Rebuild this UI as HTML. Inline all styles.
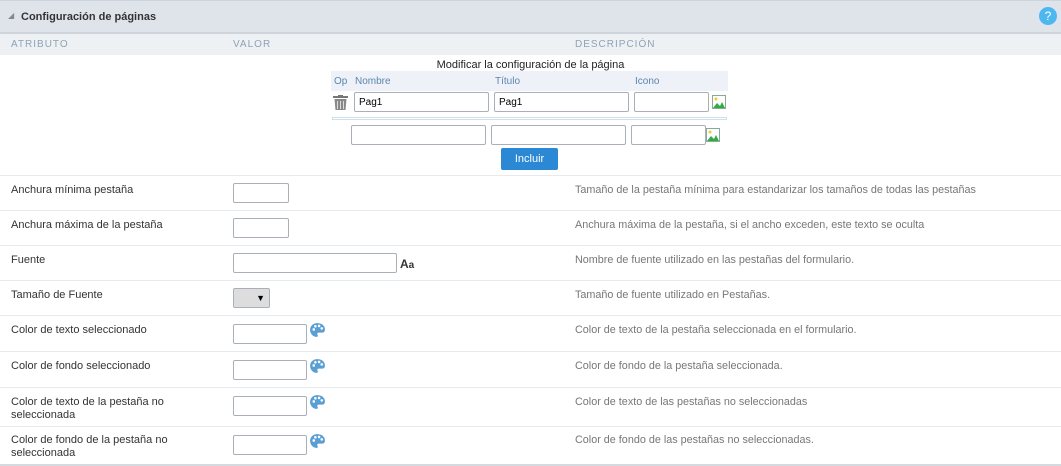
<!DOCTYPE html><html><head><style>
body{margin:0;width:1061px;height:466px;position:relative;background:#fff;font-family:"Liberation Sans",sans-serif;overflow:hidden}
.a{position:absolute}
.hd{left:0;top:0;width:1061px;height:31px;background:#dfe4eb;border-top:1px solid #cdd4dc;border-bottom:2px solid #cdd4dc}
.ch{left:0;top:34px;width:1061px;height:21px;background:#eef1f4;font-size:10px;letter-spacing:1px;color:#8fa3b3}
.in{position:absolute;border:1px solid #a9b0b8;border-radius:2px;background:#fff;box-sizing:border-box;font-size:10px;padding:4px 4px 2px}
.sep{position:absolute;left:0;width:1061px;height:1px;background:#e6e9ed}
.l{position:absolute;left:11px;font-size:11px;color:#333;line-height:13px;margin-top:1px}
.d{position:absolute;left:575px;font-size:10.8px;color:#777;margin-top:1px}
.th{position:absolute;font-size:10px;color:#5b86b0;margin-top:1px}
</style></head><body>
<div class="a hd"><span class="a" style="left:8px;top:10px;font-size:8px;color:#888">◢</span><span class="a" style="left:21px;top:10px;font-size:11px;font-weight:bold;color:#333">Configuración de páginas</span>
<div class="a" style="left:1039px;top:6px;width:18px;height:18px;border-radius:9px;background:#4db8f0;color:#fff;font-size:12px;text-align:center;line-height:18px">?</div></div>
<div class="a ch"><span class="a" style="left:11px;top:5px">ATRIBUTO</span><span class="a" style="left:233px;top:5px">VALOR</span><span class="a" style="left:575px;top:5px">DESCRIPCIÓN</span></div>
<div class="a" style="left:0;top:59px;width:1061px;text-align:center;font-size:11px;color:#222">Modificar la configuración de la página</div>
<div class="a" style="left:331px;top:71px;width:397px;height:20px;background:#eef1f7"></div>
<span class="th" style="left:334px;top:75px">Op</span><span class="th" style="left:355px;top:75px">Nombre</span><span class="th" style="left:495px;top:75px">Título</span><span class="th" style="left:635px;top:75px">Icono</span>
<svg class="a" style="left:333px;top:95px" width="15" height="15" viewBox="0 0 15 15"><rect x="0" y="1" width="15" height="2" fill="#777"/><rect x="5" y="0" width="5" height="2" fill="#777"/><path d="M1.5 4h12l-1 11h-10z" fill="#888"/><path d="M4.5 6v8M7.5 6v8M10.5 6v8" stroke="#ddd"/></svg>
<div class="in" style="left:354px;top:92px;width:135px;height:20px">Pag1</div>
<div class="in" style="left:494px;top:92px;width:135px;height:20px">Pag1</div>
<div class="in" style="left:634px;top:92px;width:75px;height:20px"></div>
<svg class="a" style="left:712px;top:95px" width="14" height="14"><rect x=".5" y=".5" width="13" height="13" fill="#fff" stroke="#8a9"/><circle cx="4" cy="4" r="1.5" fill="#ec3"/><path d="M1 13L5 8l3 3 2-4 3 6z" fill="#3a4"/></svg>
<div class="a" style="left:332px;top:117px;width:393px;height:1px;border:1px solid #cfe0e8"></div>
<div class="in" style="left:351px;top:125px;width:135px;height:20px"></div>
<div class="in" style="left:491px;top:125px;width:135px;height:20px"></div>
<div class="in" style="left:631px;top:125px;width:75px;height:20px"></div>
<svg class="a" style="left:706px;top:128px" width="14" height="14"><rect x=".5" y=".5" width="13" height="13" fill="#fff" stroke="#8a9"/><circle cx="4" cy="4" r="1.5" fill="#ec3"/><path d="M1 13L5 8l3 3 2-4 3 6z" fill="#3a4"/></svg>
<div class="a" style="left:501px;top:148px;width:57px;height:22px;background:#2a88d4;border-radius:2px;color:#fff;font-size:11px;text-align:center;line-height:22px">Incluir</div>
<div class="sep" style="top:175px"></div><div class="sep" style="top:210px"></div><div class="sep" style="top:245px"></div><div class="sep" style="top:280px"></div><div class="sep" style="top:315px"></div><div class="sep" style="top:351px"></div><div class="sep" style="top:387px"></div><div class="sep" style="top:426px"></div><div class="sep" style="top:464px;height:2px;background:#d5dae0"></div>
<div class="l" style="top:183px">Anchura mínima pestaña</div><div class="in" style="left:233px;top:183px;width:56px;height:20px"></div><div class="d" style="top:183px">Tamaño de la pestaña mínima para estandarizar los tamaños de todas las pestañas</div>
<div class="l" style="top:218px">Anchura máxima de la pestaña</div><div class="in" style="left:233px;top:218px;width:56px;height:20px"></div><div class="d" style="top:218px">Anchura máxima de la pestaña, si el ancho exceden, este texto se oculta</div>
<div class="l" style="top:253px">Fuente</div><div class="in" style="left:233px;top:253px;width:164px;height:20px"></div><span class="a" style="left:400px;top:257px;font-size:12px;font-weight:bold;color:#333">A<span style="font-size:10px">a</span></span><div class="d" style="top:253px">Nombre de fuente utilizado en las pestañas del formulario.</div>
<div class="l" style="top:288px">Tamaño de Fuente</div><div class="in" style="left:233px;top:288px;width:37px;height:20px;background:#ddd;text-align:right;font-size:9px;padding:4px 4px">▼</div><div class="d" style="top:288px">Tamaño de fuente utilizado en Pestañas.</div>
<div class="l" style="top:323px">Color de texto seleccionado</div><div class="in" style="left:233px;top:324px;width:74px;height:20px"></div><div class="d" style="top:323px">Color de texto de la pestaña seleccionada en el formulario.</div>
<div class="l" style="top:359px">Color de fondo seleccionado</div><div class="in" style="left:233px;top:360px;width:74px;height:20px"></div><div class="d" style="top:359px">Color de fondo de la pestaña seleccionada.</div>
<div class="l" style="top:395px">Color de texto de la pestaña no<br>seleccionada</div><div class="in" style="left:233px;top:396px;width:74px;height:20px"></div><div class="d" style="top:395px">Color de texto de las pestañas no seleccionadas</div>
<div class="l" style="top:433px">Color de fondo de la pestaña no<br>seleccionada</div><div class="in" style="left:233px;top:435px;width:74px;height:20px"></div><div class="d" style="top:433px">Color de fondo de las pestañas no seleccionadas.</div>
<svg width="0" height="0" style="position:absolute"><defs><symbol id="p" viewBox="0 0 16 16"><path d="M8 1C3.5 1 1 4 1 7.5 1 11 4 14 7 14c1.5 0 1.5-1 1-2-.5-1 0-2 1.5-2H12c2 0 3-1 3-3C15 3.5 12 1 8 1z" fill="#5a9fd4"/><circle cx="4.5" cy="7" r="1.2" fill="#fff"/><circle cx="6" cy="4" r="1.2" fill="#fff"/><circle cx="9.5" cy="3.7" r="1.2" fill="#fff"/><circle cx="12" cy="6" r="1.2" fill="#fff"/></symbol></defs></svg>
<svg class="a" style="left:309px;top:322px" width="17" height="17"><use href="#p"/></svg>
<svg class="a" style="left:309px;top:358px" width="17" height="17"><use href="#p"/></svg>
<svg class="a" style="left:309px;top:394px" width="17" height="17"><use href="#p"/></svg>
<svg class="a" style="left:309px;top:433px" width="17" height="17"><use href="#p"/></svg>
</body></html>
